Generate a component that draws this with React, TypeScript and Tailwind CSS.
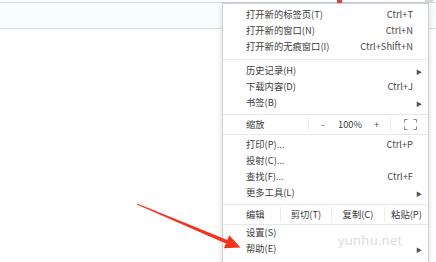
const font = { fontFamily: '"Noto Sans CJK SC", "Noto Sans", sans-serif' };

type Item = { label: string; shortcut?: string; sub?: boolean };

const Row = ({ label, shortcut, sub }: Item) => (
  <div className="flex h-4 items-center pl-[23px] pr-[15px]">
    <span className="flex-1">{label}</span>
    {shortcut && <span className="text-[#484848]">{shortcut}</span>}
    {sub && <span className="mr-[-9px] text-[6px] text-[#555]">▶</span>}
  </div>
);

const Divider = ({ className = "" }: { className?: string }) => (
  <div className={`h-px bg-[#ececec] ${className}`} />
);

const App = () => {
  return (
    <div
      className="relative h-[262px] w-[436px] overflow-hidden bg-white text-[9.3px] text-[#3c3c3c]"
      style={font}
    >
      {/* page behind the menu */}
      <div className="mt-[2px] h-[27px] border-t border-b border-t-[#cbd6e6] border-b-[#dedede] bg-[#f8fdff]" />
      <div className="absolute left-[337px] top-0 h-[3px] w-[5px] bg-[#e0443a]" />
      <div className="absolute left-[425px] top-0 h-[3px] w-[8px] bg-[#d6d6d6]" />

      {/* dropdown menu */}
      <div className="absolute left-[222px] top-[3px] w-[207px] border border-[#cfcfcf] bg-white pt-[3px] pb-2 shadow-[0_2px_6px_rgba(0,0,0,0.15)]">
        <Row label="打开新的标签页(T)" shortcut="Ctrl+T" />
        <Row label="打开新的窗口(N)" shortcut="Ctrl+N" />
        <Row label="打开新的无痕窗口(I)" shortcut="Ctrl+Shift+N" />
        <Divider className="mt-[4px] mb-[3px]" />
        <Row label="历史记录(H)" sub />
        <Row label="下载内容(D)" shortcut="Ctrl+J" />
        <Row label="书签(B)" sub />

        <div className="mt-[3px] flex h-[21px] items-center border-y border-[#e8e8e8]">
          <span className="w-[85px] pl-[23px]">缩放</span>
          <div className="flex h-[15px] w-[83px] items-center border-x border-[#ececec]">
            <span className="w-[28px] text-center text-[#555]">-</span>
            <span className="w-[26px] text-center">100%</span>
            <span className="w-[27px] text-center text-[#555]">+</span>
          </div>
          <div className="flex flex-1 justify-center pl-[2px]">
            <svg width="13" height="11" viewBox="0 0 13 11" fill="none" stroke="#888" strokeWidth="1">
              <path d="M0.5 3.5V0.5H3.5M9.5 0.5H12.5V3.5M12.5 7.5V10.5H9.5M3.5 10.5H0.5V7.5" />
            </svg>
          </div>
        </div>

        <div className="mt-[2px]">
          <Row label="打印(P)..." shortcut="Ctrl+P" />
          <Row label="投射(C)..." />
          <Row label="查找(F)..." shortcut="Ctrl+F" />
          <Row label="更多工具(L)" sub />
        </div>

        <div className="mt-[3px] flex h-[21px] items-center border-y border-[#e8e8e8]">
          <span className="w-[57px] pl-[23px]">编辑</span>
          <span className="flex h-[15px] w-[51px] items-center justify-center border-l border-[#ececec]">剪切(T)</span>
          <span className="flex h-[15px] w-[53px] items-center justify-center border-l border-[#ececec]">复制(C)</span>
          <span className="flex h-[15px] flex-1 items-center justify-center border-l border-[#ececec]">粘贴(P)</span>
        </div>

        <Row label="设置(S)" />
        <Row label="帮助(E)" sub />
      </div>

      {/* watermark */}
      <div
        className="absolute left-[338px] top-[231px] text-[13px] tracking-[0.3px] text-[#dadada]"
        style={{ fontFamily: '"Open Sans", sans-serif' }}
      >
        yunhu.net
      </div>

      {/* red annotation arrow */}
      <svg className="absolute left-0 top-0" width="436" height="262">
        <polygon
          points="137.2,203.4 227.4,239.9 229.3,235.2 240.5,247.5 223.9,248.2 225.8,243.5 136.8,204.6"
          fill="#f5321e"
        />
      </svg>
    </div>
  );
};

export default App;
